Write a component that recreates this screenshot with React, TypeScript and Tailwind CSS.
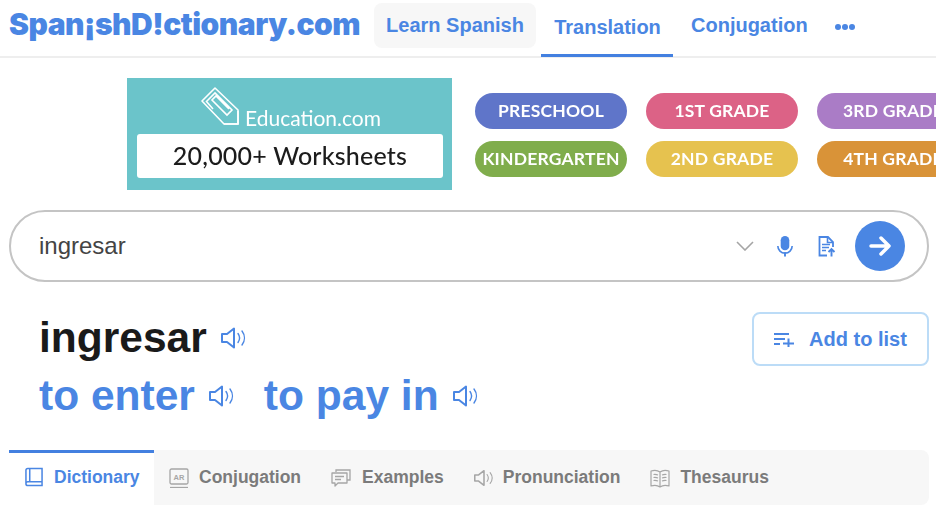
import React from 'react';

const sans = 'font-["Liberation_Sans",Arial,sans-serif]';

function Speaker({ className }: { className: string }) {
  return (
    <svg viewBox="0 0 26 22" fill="none" stroke="currentColor" className={className}>
      <path d="M1 7h5l7-5.500v19L6 15H1z" strokeWidth="2" strokeLinejoin="round" />
      <path d="M17 6.500c2 2.800 2 6.200 0 9M21 4c3.200 4.200 3.200 9.800 0 14" strokeWidth="1.400" strokeLinecap="round" />
    </svg>
  );
}

function Pill({ label, color }: { label: string; color: string }) {
  return (
    <div className={`flex h-9 w-[152px] shrink-0 items-center justify-center rounded-full font-["Lato",sans-serif] text-[17.500px] font-bold tracking-[0.2px] whitespace-nowrap text-white ${color}`}>
      {label}
    </div>
  );
}

function TabItem({ icon, label, className }: { icon: React.ReactNode; label: string; className: string }) {
  return (
    <div className={`flex items-center text-[17.500px] font-bold text-[#7b7b7b] ${className}`}>
      {icon}
      <span>{label}</span>
    </div>
  );
}

function App() {
  return (
    <div className={`h-[506px] w-[936px] overflow-hidden bg-white ${sans}`}>
      {/* navbar */}
      <div className="flex h-[58px] items-start border-b-2 border-[#eeeeee]">
        <div className="mt-[7px] ml-[9px] w-[365px] font-['Inter',sans-serif] text-[30px] leading-[34px] font-black tracking-[-0.5px] whitespace-nowrap text-[#4a86e3]">
          Span¡shD!ctionary.com
        </div>
        <div className="mt-[3px] flex h-[45px] w-[162px] items-center justify-center rounded-lg bg-[#f7f7f7] pb-[2px] text-[20px] font-bold text-[#4a86e3]">
          Learn Spanish
        </div>
        <div className="ml-[5px] flex h-[57px] w-[132px] items-center justify-center border-b-[3px] border-[#4380e0] pl-[1px] text-[20px] font-bold text-[#4a86e3]">
          Translation
        </div>
        <div className="mt-[3px] ml-[18px] flex h-[45px] items-center pb-[2px] text-[20px] font-bold text-[#4a86e3]">
          Conjugation
        </div>
        <div className="mt-[24px] ml-[27px] flex gap-[1px]">
          <span className="size-[6px] rounded-full bg-[#4a86e3]" />
          <span className="size-[6px] rounded-full bg-[#4a86e3]" />
          <span className="size-[6px] rounded-full bg-[#4a86e3]" />
        </div>
      </div>

      {/* ad */}
      <div className="mt-[20px] ml-[127px] flex items-center gap-[23px] blur-[0.3px]">
        <div className="flex h-[112px] w-[325px] shrink-0 flex-col bg-[#6bc4ca] pt-[9px] pr-[9px] pl-[10px]">
          <div className="flex h-[47px] items-start gap-[5px] pl-[63px] text-white">
            <svg viewBox="0 0 40 40" fill="none" stroke="currentColor" strokeWidth="1.600" className="size-[40px] shrink-0">
              <path d="M24 37 2 14 15 1l23 22v14z" strokeLinejoin="round" />
              <path d="M13 22 6.500 14.500 15 6l17 17-5 5-15-15 4-4 13 13" />
              <path d="M24 37h14V24" />
            </svg>
            <span className="mt-[19px] font-['Lato',sans-serif] text-[21px] leading-[24px] font-normal">Education.com</span>
          </div>
          <div className="flex h-[44px] w-full items-center justify-center rounded-[3px] bg-white font-['Lato',sans-serif] text-[25px] font-medium tracking-[0.2px] text-[#1c1c1c]">
            20,000+ Worksheets
          </div>
        </div>
        <div className="mt-[2px] flex flex-col gap-3">
          <div className="flex gap-[19px]">
            <Pill label="PRESCHOOL" color="bg-[#5f75c9]" />
            <Pill label="1ST GRADE" color="bg-[#dc6286]" />
            <Pill label="3RD GRADE" color="bg-[#aa7cc6]" />
          </div>
          <div className="flex gap-[19px]">
            <Pill label="KINDERGARTEN" color="bg-[#80ad4c]" />
            <Pill label="2ND GRADE" color="bg-[#e6c24f]" />
            <Pill label="4TH GRADE" color="bg-[#d99338]" />
          </div>
        </div>
      </div>

      {/* search */}
      <div className="mt-[20px] mr-[7px] ml-[9px] flex h-[72px] items-center rounded-full border-2 border-[#c4c4c4] pr-[22px] pl-[28px]">
        <span className="flex-1 pb-[1px] text-[24px] text-[#444444]">ingresar</span>
        <svg viewBox="0 0 18 10" fill="none" stroke="#a5a5a5" strokeWidth="1.600" className="h-[10px] w-[18px]">
          <path d="M1 1l8 8 8-8" />
        </svg>
        <svg viewBox="0 0 16 22" className="ml-[23px] h-[21px] w-[16px] text-[#4a86e3]" fill="currentColor">
          <rect x="3.500" y="0" width="9" height="15" rx="4.500" />
          <path d="M0.500 10.500a7.500 7.500 0 0 0 15 0" fill="none" stroke="currentColor" strokeWidth="1.700" />
          <rect x="7" y="17" width="2" height="4.500" />
        </svg>
        <svg viewBox="0 0 18 21" fill="none" stroke="#4a86e3" className="ml-[25px] h-[21px] w-[18px]">
          <path d="M9 19.500H1.500V1h8.500l5 5v5" strokeWidth="1.800" />
          <path d="M9.500 1v5.500h5.500" strokeWidth="1.600" />
          <path d="M4 8.500h8M4 11.500h7M4 14.500h4" strokeWidth="1.500" />
          <path d="M13.500 20.500v-7M10.500 16l3-3 3 3" strokeWidth="1.900" />
        </svg>
        <div className="ml-[19px] flex size-[50px] items-center justify-center rounded-full bg-[#4a86e3]">
          <svg viewBox="0 0 22 20" fill="none" stroke="white" strokeWidth="3.500" strokeLinecap="round" strokeLinejoin="round" className="h-[20px] w-[22px]">
            <path d="M2 10h18M12 2l8 8-8 8" />
          </svg>
        </div>
      </div>

      {/* headword */}
      <div className="mt-[28px] mr-[7px] ml-[9px] flex items-start justify-between">
        <div className="pl-[30px]">
          <div className="flex h-[56px] items-center gap-[14px]">
            <span className="text-[42.500px] leading-[56px] font-bold text-[#1a1a1a]">ingresar</span>
            <Speaker className="h-[22px] w-[26px] text-[#4a86e3]" />
          </div>
          <div className="flex h-[59px] items-center text-[#4a86e3]">
            <span className="text-[42.500px] leading-[56px] font-bold">to enter</span>
            <Speaker className="ml-[14px] h-[22px] w-[26px]" />
            <span className="ml-[29px] text-[42.500px] leading-[56px] font-bold">to pay in</span>
            <Speaker className="ml-[14px] h-[22px] w-[26px]" />
          </div>
        </div>
        <div className="mt-[2px] flex h-[54px] w-[177px] items-center justify-center gap-[15px] rounded-lg border-2 border-[#bcdcf7] text-[20px] font-bold text-[#4a86e3]">
          <svg viewBox="0 0 20 15" fill="none" stroke="currentColor" strokeWidth="2" className="h-[15px] w-[20px]">
            <path d="M0 2h15M0 7h11M0 12h6M9 11.500h11M14.500 6.500v8.500" />
          </svg>
          Add to list
        </div>
      </div>

      {/* tabs */}
      <div className="mt-[25px] mr-[7px] ml-[9px] flex h-[55px] rounded-r-lg bg-[#f7f7f7]">
        <div className="flex w-[145px] items-center gap-[11px] border-t-[3px] border-[#4380e0] bg-white pb-[4px] pl-[16px] text-[17.500px] font-bold text-[#4a86e3]">
          <svg viewBox="0 0 19 20" fill="none" stroke="currentColor" strokeWidth="1.600" className="h-[20px] w-[18px]">
            <path d="M1 17V3a2 2 0 0 1 2-2h15v18H3a2 2 0 0 1-2-2a2 2 0 0 1 2-2h15M5 1v14" />
          </svg>
          Dictionary
        </div>
        <div className="flex items-center pl-[15px]">
          <TabItem
            label="Conjugation"
            className="gap-[10px] pr-[30px]"
            icon={
              <svg viewBox="0 0 20 20" fill="none" stroke="#a6a6a6" className="h-[20px] w-[20px]">
                <rect x="1" y="1" width="18" height="15" rx="1.500" strokeWidth="1.300" />
                <path d="M1 19.500h18" strokeWidth="1.300" />
                <text x="10" y="11.500" textAnchor="middle" fontSize="7.500" fontWeight="700" fill="#a6a6a6" stroke="none">AR</text>
              </svg>
            }
          />
          <TabItem
            label="Examples"
            className="gap-[11px] pr-[30px]"
            icon={
              <svg viewBox="0 0 20 20" fill="none" stroke="#a6a6a6" strokeWidth="1.300" className="h-[20px] w-[20px]">
                <path d="M5 4V2h14v10h-3" />
                <path d="M1 5h15v10H7l-3 3v-3H1z" strokeLinejoin="round" />
                <path d="M4 8.500h9M4 11.500h6" />
              </svg>
            }
          />
          <TabItem
            label="Pronunciation"
            className="gap-[9px] pr-[30px]"
            icon={<Speaker className="h-[18px] w-[20px] text-[#a6a6a6]" />}
          />
          <TabItem
            label="Thesaurus"
            className="gap-[10px]"
            icon={
              <svg viewBox="0 0 20 20" fill="none" stroke="#a6a6a6" strokeWidth="1.200" className="h-[20px] w-[20px]">
                <path d="M10 4C8 2.500 4 2 1 3v15c3-1 7-.5 9 1 2-1.500 6-2 9-1V3c-3-1-7-.5-9 1zM10 4v15" strokeLinejoin="round" />
                <path d="M3.500 6.500c1.500-.2 3-.1 4.500.5M3.500 9.500c1.500-.2 3-.1 4.500.5M3.500 12.500c1.500-.2 3-.1 4.500.5M16.500 6.500c-1.500-.2-3-.1-4.500.5M16.500 9.500c-1.500-.2-3-.1-4.500.5M16.500 12.500c-1.500-.2-3-.1-4.500.5" />
              </svg>
            }
          />
        </div>
      </div>
    </div>
  );
}

export default App;
